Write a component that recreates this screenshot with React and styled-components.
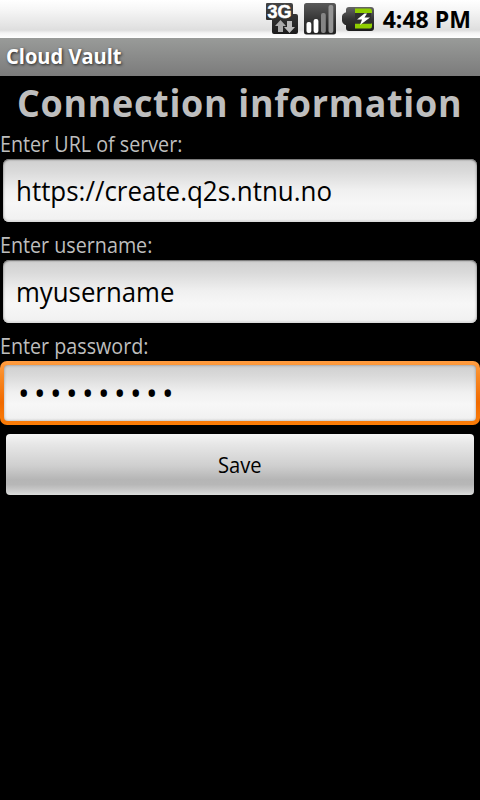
import React from 'react';
import styled, { createGlobalStyle } from 'styled-components';

const GlobalStyle = createGlobalStyle`
  * { box-sizing: border-box; }
  html, body { margin: 0; padding: 0; background: #000; }
`;

const Screen = styled.div`
  width: 480px;
  height: 800px;
  overflow: hidden;
  background: #000;
  color: #bebebe;
  font-family: "Open Sans", "Noto Sans", sans-serif;
  white-space: nowrap;
`;

const Condensed = styled.span`
  display: inline-block;
  transform: scaleX(${(p) => p.$scale || 0.96});
  transform-origin: ${(p) => p.$origin || 'left'} center;
`;

const StatusBar = styled.header`
  display: flex;
  justify-content: flex-end;
  height: 38px;
  padding: 3px 9px 0 0;
  background: linear-gradient(#fff 0, #f6f6f6 10px, #e2e2e2 27px, #dedede 30px, #f4f4f4 33px, #fff 38px);
`;

const StatusIcons = styled.div`
  display: flex;
  gap: 6px;
  margin-right: 5px;
`;

const StatusIcon = styled.svg`
  display: block;
  width: 32px;
  height: 32px;
`;

const Clock = styled.time`
  margin-top: -1px;
  color: #000;
  font-size: 24px;
  font-weight: 700;
  line-height: 33px;
`;

const TitleBar = styled.div`
  height: 38px;
  padding: 4px 0 0 6px;
  background: linear-gradient(#999b99, #7b7b7b);
  color: #fff;
  font-size: 21px;
  font-weight: 700;
  line-height: 28px;
  text-shadow: 1px 1px 3px rgba(0, 0, 0, 0.75);
`;

const Heading = styled.h1`
  height: 54px;
  margin: 0;
  padding: 1px 0 0 17px;
  font-size: 37px;
  font-weight: 700;
  line-height: 51px;
  letter-spacing: 0.72px;
`;

const Group = styled.div`
  display: flex;
  flex-direction: column;
  height: 101px;
`;

const Label = styled.label`
  height: 28px;
  font-size: 21px;
  line-height: 28px;
`;

const Field = styled.div`
  height: ${(p) => (p.$focused ? 64 : 63)}px;
  margin: 1px ${(p) => (p.$focused ? 0 : 3)}px 0;
  padding: ${(p) => (p.$focused ? '4px 4px 4px 4px' : '0')};
  border-radius: 7px;
  background: ${(p) => (p.$focused ? 'linear-gradient(#ff9d42, #f98a25 22%, #f06a00 65%, #fb7d08)' : 'none')};
`;

const FieldFace = styled.div`
  height: 100%;
  padding: ${(p) => (p.$focused ? '9px 0 0 14px' : '13px 0 0 13px')};
  border-radius: ${(p) => (p.$focused ? 4 : 6)}px;
  background: linear-gradient(#cfcfcf, #dadada 20%, #f0f0f0 49%, #f7f7f7 70%, #f0f0f0);
  box-shadow: ${(p) => (p.$focused
    ? 'inset 0 0 3px rgba(0, 0, 0, 0.35)'
    : 'inset 0 1px 1px #777, inset 0 0 3px rgba(0, 0, 0, 0.4), inset 0 -1px 0 #fff')};
  color: #000;
  font-size: ${(p) => (p.$focused ? 32 : 27)}px;
  line-height: 37px;
  letter-spacing: ${(p) => (p.$focused ? '4.64px' : '0')};
`;

const SaveButton = styled.button`
  display: block;
  width: 468px;
  height: 61px;
  margin: 1px 6px 0;
  padding: 1px 0 0;
  border: 0;
  border-radius: 4px;
  background: linear-gradient(#f6f6f6, #e8e8e8 15%, #cfcfcf 52%, #b5b5b5 75%, #b7b7b7 83%, #cdcdcd 94%, #dcdedc);
  color: #000;
  font: 400 21px/28px "Open Sans", "Noto Sans", sans-serif;
`;

function NetworkIcon() {
  return (
    <StatusIcon viewBox="0 0 32 32">
      <defs>
        <linearGradient id="net" x2="0" y2="1">
          <stop stopColor="#444" />
          <stop offset="1" stopColor="#1b1b1b" />
        </linearGradient>
      </defs>
      <path d="M1 0H25Q27 0 27 2V11H30Q32 11 32 13V29Q32 31 30 31H8Q6 31 6 29V17H1Q0 17 0 16V1Q0 0 1 0Z" fill="url(#net)" />
      <text x="1.500" y="14.500" textLength="24" lengthAdjust="spacingAndGlyphs" fontFamily="Liberation Sans" fontWeight="700" fontSize="17.5" fill="#fff" stroke="#fff" strokeWidth=".5">3G</text>
      <path d="M14.500 17L20 23H17V29H12V23H9Z" fill="#aaa" />
      <path d="M21 18H26V24H29L23.500 30L18 24H21Z" fill="#bbb" />
    </StatusIcon>
  );
}

function SignalIcon() {
  return (
    <StatusIcon viewBox="0 0 32 32">
      <defs>
        <linearGradient id="sig" x2="0" y2="1">
          <stop stopColor="#5a5a5a" />
          <stop offset=".6" stopColor="#303030" />
          <stop offset="1" stopColor="#202020" />
        </linearGradient>
      </defs>
      <rect width="32" height="31.500" rx="2.500" fill="url(#sig)" />
      <rect x="2.500" y="19" width="4.800" height="11" rx="2" fill="#fff" />
      <rect x="9.600" y="16" width="4.800" height="14" rx="2" fill="#fff" />
      <rect x="17" y="10" width="4.800" height="20" rx="2" fill="#858585" />
      <rect x="24.500" y="2" width="4.800" height="28" rx="2" fill="#959595" />
    </StatusIcon>
  );
}

function BatteryIcon() {
  return (
    <StatusIcon viewBox="0 0 32 32">
      <defs>
        <linearGradient id="bat" x2="0" y2="1">
          <stop stopColor="#666" />
          <stop offset=".5" stopColor="#333" />
          <stop offset="1" stopColor="#1c1c1c" />
        </linearGradient>
      </defs>
      <path d="M7 4H29Q32 4 32 7V25Q32 28 29 28H7Q4 28 4 25V22H3Q0 20 0 18V13Q0 11 3 9.500H4V7Q4 4 7 4Z" fill="url(#bat)" />
      <path d="M13 5.500H28Q30 5.500 30 8V10H13ZM13 20.500H30V23Q30 25.500 28 25.500H13Z" fill="#8fce00" />
      <path d="M13 10H29V20.500H13Z" fill="#303030" />
      <path d="M22.500 10.500L15 16.500H20L18 22L28 14.500H22.500L25 10.500Z" fill="#fff" />
    </StatusIcon>
  );
}

export default function App() {
  return (
    <>
      <GlobalStyle />
      <Screen>
        <StatusBar>
          <StatusIcons>
            <NetworkIcon />
            <SignalIcon />
            <BatteryIcon />
          </StatusIcons>
          <Clock><Condensed $origin="right">4:48 PM</Condensed></Clock>
        </StatusBar>
        <TitleBar><Condensed $scale={0.955}>Cloud Vault</Condensed></TitleBar>
        <Heading><Condensed $scale={0.97}>Connection information</Condensed></Heading>
        <Group>
          <Label><Condensed $scale={0.938}>Enter URL of server:</Condensed></Label>
          <Field><FieldFace><Condensed>https://create.q2s.ntnu.no</Condensed></FieldFace></Field>
        </Group>
        <Group>
          <Label><Condensed $scale={0.938}>Enter username:</Condensed></Label>
          <Field><FieldFace><Condensed $scale={0.955}>myusername</Condensed></FieldFace></Field>
        </Group>
        <Group>
          <Label><Condensed $scale={0.938}>Enter password:</Condensed></Label>
          <Field $focused><FieldFace $focused><Condensed>••••••••••</Condensed></FieldFace></Field>
        </Group>
        <SaveButton type="button"><Condensed $origin="center">Save</Condensed></SaveButton>
      </Screen>
    </>
  );
}
